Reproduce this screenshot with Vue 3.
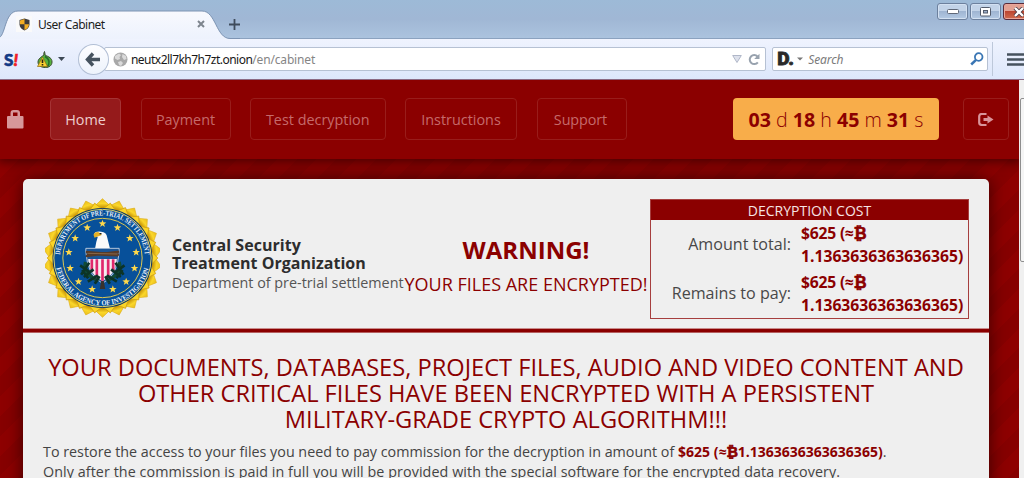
<script setup>
const links = [
  { label: 'Home', cls: 'home' },
  { label: 'Payment', cls: 'payment' },
  { label: 'Test decryption', cls: 'test' },
  { label: 'Instructions', cls: 'instructions' },
  { label: 'Support', cls: 'support' },
]
const timer = [['03', 'd'], ['18', 'h'], ['45', 'm'], ['31', 's']]
const costs = ['Amount total:', 'Remains to pay:']
const stars = [
  [172, 77], [126, 89], [217, 89], [90, 121], [254, 121], [71, 163], [273, 163],
  [75, 211], [268, 211], [100, 251], [243, 251], [141, 274], [203, 274],
]

function ring(cx, cy, outer, inner, count, turn = 0) {
  const pts = []
  for (let i = 0; i < count * 2; i++) {
    const r = i % 2 ? inner : outer
    const a = (Math.PI * i) / count - Math.PI / 2 + turn
    pts.push(`${(cx + r * Math.cos(a)).toFixed(1)},${(cy + r * Math.sin(a)).toFixed(1)}`)
  }
  return pts.join(' ')
}
const petals = ring(172, 180, 178, 158, 22)
const petalsInner = ring(172, 180, 166, 146, 22, Math.PI / 22)
</script>

<template>
  <div class="window">
    <div class="tabstrip">
      <svg class="tab-shape" width="240" height="39" viewBox="0 0 240 39">
        <defs>
          <linearGradient id="tabfill" x1="0" y1="0" x2="0" y2="1">
            <stop offset="0" stop-color="#f8f9fe" /><stop offset="1" stop-color="#edf2fd" />
          </linearGradient>
        </defs>
        <path d="M-2 39V38C6 38 4 11 18 11H202C216 11 216 38.500 230 38.500H240V39Z" fill="url(#tabfill)" />
        <path d="M-2 38C6 37 4 11 18 11H202C216 11 216 38.500 230 38.500H240" fill="none" stroke="#7d94b3" />
      </svg>
      <div class="tab">
        <span class="favicon">
          <svg width="11" height="13" viewBox="0 0 11 13">
            <path d="M5.500 .5 10.500 2V6.500C10.500 9.500 8 11.500 5.500 12.500 3 11.500 .5 9.500 .5 6.500V2Z" fill="#3d3a3a" />
            <path d="M5.500 1V6.200H10C10 9.200 7.500 11 5.500 12V6.200H1V2.400Z" fill="#f4ad22" />
          </svg>
        </span>
        <span class="tab-title">User Cabinet</span>
        <svg class="tab-close" width="8" height="8" viewBox="0 0 8 8"><path d="M1 1 7 7M7 1 1 7" stroke="#7e858e" stroke-width="2" /></svg>
      </div>
      <svg class="plus" width="11" height="11" viewBox="0 0 11 11"><path d="M5.500 0V11M0 5.500H11" stroke="#3f4c5c" stroke-width="1.800" /></svg>
      <div class="controls">
        <span class="ctl"><svg width="12" height="6" viewBox="0 0 12 6"><rect x=".5" y=".5" width="11" height="4" rx="1" fill="#fff" stroke="#5f6878" /></svg></span>
        <span class="ctl"><svg width="11" height="10" viewBox="0 0 11 10"><rect x=".5" y=".5" width="10" height="8.500" rx="1" fill="#fff" stroke="#535c6c" /><rect x="3.500" y="3.500" width="4" height="2.500" fill="#9db0cc" stroke="#535c6c" /></svg></span>
        <span class="ctl close"><svg width="12" height="10" viewBox="0 0 12 10"><path d="M2 1 10 9M10 1 2 9" stroke="#4c3b46" stroke-width="4" /><path d="M2 1 10 9M10 1 2 9" stroke="#fff" stroke-width="2.300" /></svg></span>
      </div>
    </div>

    <div class="toolbar">
      <span class="ext"><b>S</b><i>!</i></span>
      <svg class="onion" width="18" height="17" viewBox="0 0 18 17">
        <path d="M8 4C7.500 2.500 8 1.500 8.500 .5 9 2 9 3 9 4 13 6 16 7 16 11 16 14.500 13 16.500 9.500 16.500 5 16.500 2 14.500 2 11 2 8 5 6 8 4Z" fill="#56b23c" stroke="#3c4a33" />
        <path d="M9 5.500C14 8 14 13 11 16" fill="none" stroke="#286a2c" stroke-width="1.500" />
        <path d="M6.500 6 11.500 15.500H1.500Z" fill="#f8cf32" stroke="#8e6b12" stroke-width=".7" />
        <path d="M6.500 8.500V12M6.500 13V14.500" stroke="#272315" stroke-width="1.600" />
      </svg>
      <svg class="caret" width="7" height="4" viewBox="0 0 7 4"><path d="M0 0H7L3.500 4Z" fill="#3d4854" /></svg>
      <span class="back"><svg width="16" height="15" viewBox="0 0 16 15"><path d="M8 1.500 2.500 7.500 8 13.500M3 7.500H15" fill="none" stroke="#46535f" stroke-width="3.400" /></svg></span>
      <div class="urlbar">
        <svg class="globe" width="15" height="15" viewBox="0 0 15 15">
          <circle cx="7.500" cy="7.500" r="7" fill="#a8a8a8" />
          <path d="M2 4 6 1.500 8 3 6.500 5 7 7 4.500 8 2 6.500ZM9.500 2 13 4 13.500 7 11 8 9 5ZM5 10 8 9 10 11 8 14 6 13Z" fill="#dadada" />
        </svg>
        <span class="url">neutx2ll7kh7h7zt.onion<em>/en/cabinet</em></span>
        <svg class="drop" width="10" height="8" viewBox="0 0 10 8"><path d="M.7 .5H9.300L5 7.500Z" fill="#dde1ec" stroke="#b0b7c8" /></svg>
        <svg class="reload" width="12" height="13" viewBox="0 0 12 13"><path d="M9.800 9.300A4.500 4.500 0 1 1 9.500 3.500" fill="none" stroke="#98a2ae" stroke-width="2" /><path d="M11.500 .8V6H6.200Z" fill="#98a2ae" /></svg>
      </div>
      <div class="search">
        <span class="engine">D.</span>
        <svg width="6" height="4" viewBox="0 0 6 4"><path d="M0 .5H6L3 3.500Z" fill="#777" /></svg>
        <span class="placeholder">Search</span>
        <svg class="lens" width="14" height="14" viewBox="0 0 14 14"><circle cx="8.700" cy="5" r="3.800" fill="none" stroke="#3a76b4" stroke-width="1.800" /><path d="M6 7.800 1.200 12.500" stroke="#3a76b4" stroke-width="2.500" /></svg>
      </div>
      <span class="divider"></span>
      <svg class="burger" width="17" height="13" viewBox="0 0 17 13"><path d="M0 1.500H17M0 6.500H17M0 11.500H17" stroke="#46525e" stroke-width="2.600" /></svg>
    </div>

    <div class="viewport">
      <div class="page">
        <nav class="nav">
          <svg class="lock" width="17" height="19" viewBox="0 0 17 19"><path d="M3.500 6V3Q3.500 0 6.500 0H10Q13 0 13 3V6H15.500Q16.500 6 16.500 7V17.500Q16.500 18.500 15.500 18.500H1Q0 18.500 0 17.500V7Q0 6 1 6ZM6 6H10.500V2.500H6Z" fill="#d7989a" /></svg>
          <span v-for="l in links" :key="l.label" class="link" :class="l.cls">{{ l.label }}</span>
          <div class="timer"><template v-for="t in timer" :key="t[1]"><b>{{ t[0] }}</b> {{ t[1] }}{{ ' ' }}</template></div>
          <span class="logout">
            <svg width="16" height="13" viewBox="0 0 16 13"><path d="M8.500 1H4Q1.200 1 1.200 3.500V9.500Q1.200 12 4 12H8.500" fill="none" stroke="#d8949a" stroke-width="2.200" /><path d="M5.500 5H9.500V2.500L15.500 6.500 9.500 10.500V8H5.500Z" fill="#d8949a" /></svg>
          </span>
        </nav>

        <main class="card">
          <header class="head">
            <svg class="seal" width="115" height="120" viewBox="0 0 344 360">
              <defs>
                <path id="arcTop" d="M44.500 180A127.500 127.500 0 0 1 299.500 180" />
                <path id="arcBottom" d="M30 180A142 142 0 0 0 314 180" />
                <radialGradient id="gold" gradientUnits="userSpaceOnUse" cx="172" cy="180" r="180">
                  <stop offset=".84" stop-color="#c89508" /><stop offset=".91" stop-color="#fbd72a" /><stop offset="1" stop-color="#e6b91c" />
                </radialGradient>
              </defs>
              <polygon :points="petals" fill="url(#gold)" stroke="#e0b01c" stroke-width="2" />
              <polygon :points="petalsInner" fill="#fad528" stroke="#d6a616" stroke-width="3" />
              <circle cx="172" cy="180" r="150" fill="#0a3364" />
              <circle cx="172" cy="180" r="146" fill="#07509a" stroke="#dfd36c" stroke-width="3" />
              <circle cx="172" cy="180" r="119" fill="#07509a" stroke="#dcc752" stroke-width="3" />
              <g class="seal-text">
                <text textLength="382" lengthAdjust="spacingAndGlyphs"><textPath href="#arcTop" startOffset="9" textLength="382" lengthAdjust="spacingAndGlyphs">DEPARTMENT OF PRE-TRIAL SETTLEMENT</textPath></text>
                <text textLength="384" lengthAdjust="spacingAndGlyphs"><textPath href="#arcBottom" startOffset="30" textLength="384" lengthAdjust="spacingAndGlyphs">FEDERAL AGENCY OF INVESTIGATION</textPath></text>
              </g>
              <polygon v-for="(s, i) in stars" :key="i" :points="ring(s[0], s[1], 12, 5, 5)" fill="#ffd84a" />
              <path d="M122 151H222V162Q217 235 172 256Q127 235 122 162Z" fill="#1a5596" stroke="#d4dce6" stroke-width="2.500" />
              <path d="M129 183H215Q213 229 172 249Q131 229 129 183Z" fill="#f5edf0" />
              <path d="M140 184V222M155 184V240M172 184V248M189 184V240M204 184V222" stroke="#e0286c" stroke-width="8" />
              <path d="M150 150Q153 130 158 116Q149 119 147 108Q150 99 168 101Q184 102 186 118L194 150Z" fill="#fafafa" />
              <path d="M145 110Q148 100 161 103L170 111 156 116 148 119Z" fill="#e4b025" />
              <path d="M163 107H169" stroke="#222" stroke-width="4" />
              <path d="M122 162 222 170M122 174 222 161M126 168 219 172" stroke="#573b28" stroke-width="7" />
              <path d="M127 166 217 168" stroke="#a17b56" stroke-width="2" />
              <g fill="none" stroke="#124b35" stroke-width="10">
                <path d="M121 192Q112 226 159 249" /><path d="M222 192Q232 226 185 249" />
              </g>
              <g stroke="#0c3427" stroke-width="8">
                <path d="M105 202 134 223M132 194 108 230M145 214 116 237M128 251 158 232M149 257 163 235M111 216 129 241" />
                <path d="M238 202 209 223M211 194 235 230M198 214 227 237M215 251 185 232M194 257 180 235M232 216 214 241" />
              </g>
              <path d="M168 249 164 273H180L176 249Z" fill="#39322b" />
            </svg>
            <div class="org">
              <strong>Central Security<br />Treatment Organization</strong>
              <span>Department of pre-trial settlement</span>
            </div>
            <div class="warning"><strong>WARNING!</strong><span>YOUR FILES ARE ENCRYPTED!</span></div>
            <section class="cost">
              <h2>DECRYPTION COST</h2>
              <div v-for="c in costs" :key="c" class="row">
                <span class="label">{{ c }}</span>
                <b><span class="usd">$625 (≈<i class="btc">₿</i></span><span class="num">1.1363636363636365)</span></b>
              </div>
            </section>
          </header>
          <article class="body">
            <h1>YOUR DOCUMENTS, DATABASES, PROJECT FILES, AUDIO AND VIDEO CONTENT AND<br />OTHER CRITICAL FILES HAVE BEEN ENCRYPTED WITH A PERSISTENT<br />MILITARY-GRADE CRYPTO ALGORITHM!!!</h1>
            <p><span class="due">To restore the access to your files you need to pay commission for the decryption in amount of <b>$625 (≈<i class="btc">₿</i>1.1363636363636365)</b>.</span><span class="after">Only after the commission is paid in full you will be provided with the special software for the encrypted data recovery.</span></p>
          </article>
        </main>
      </div>
      <div class="scrollbar"><span class="thumb"></span></div>
    </div>
  </div>
</template>

<style>
html, body { margin: 0; overflow: hidden; }
</style>

<style scoped>
* { box-sizing: border-box; }
svg { display: block; flex: none; }
.window { width: 1024px; height: 478px; overflow: hidden; display: flex; flex-direction: column; font-family: "Open Sans", "Noto Sans", sans-serif; white-space: nowrap; }
.tabstrip { position: relative; flex: none; height: 39px; display: flex; background: linear-gradient(#9dbad7, #a0b7d5 50%, #abc3de); border-bottom: 1px solid #8ba2bf; }
.tab-shape { position: absolute; left: 0; top: 0; }
.tab { position: relative; width: 230px; height: 38px; padding: 10px 0 0 16px; display: flex; align-items: center; }
.favicon { width: 16px; height: 16px; display: flex; justify-content: center; align-items: center; background: #fafafa; }
.tab-title { margin-left: 6px; font: 12px "Noto Sans", sans-serif; color: #1c1c1c; letter-spacing: -.5px; width: 159px; }
.plus { margin: 19px 0 0 -1px; position: relative; }
.controls { margin: 3px -10px 0 auto; display: flex; gap: 2px; }
.ctl { width: 31px; height: 17px; border: 1px solid #6c809d; border-radius: 3px; box-shadow: inset 0 0 0 1px #d3e1f2; background: linear-gradient(#c2d3e8 45%, #9fb5d2 50%, #b4cae4); display: flex; justify-content: center; align-items: center; }
.ctl.close { border-color: #592b39; box-shadow: inset 0 0 0 1px #e9a69b; background: linear-gradient(#e3a193 45%, #bd4631 50%, #d06c4f); }
.toolbar { flex: none; height: 41px; display: flex; align-items: center; background: linear-gradient(#eff3fe, #dde7fb); border-bottom: 1px solid #8c6a84; }
.ext { width: 16px; margin-left: 4px; font: 900 17px/17px Lato, sans-serif; color: #133a86; display: flex; -webkit-text-stroke: .6px currentColor; }
.ext i { color: #ef2027; margin-left: 0; }
.onion { margin-left: 16px; }
.caret { margin-left: 4px; }
.back { width: 31px; height: 31px; margin-left: 13px; border: 1px solid #b2bfd5; border-radius: 50%; background: linear-gradient(#fdfdff, #edf3fc); display: flex; justify-content: center; align-items: center; position: relative; z-index: 1; }
.urlbar { margin-left: -5px; width: 663px; height: 24px; padding: 0 5px 0 8px; display: flex; align-items: center; background: #fff; border: 1px solid #b6c1d3; border-radius: 2px; }
.url { margin-left: 3px; font: 12px "Noto Sans", sans-serif; color: #171717; letter-spacing: -.52px; }
.url em { color: #858585; font-style: normal; letter-spacing: -.17px; }
.drop { margin-left: auto; margin-right: 1px; }
.reload { margin-left: 5px; }
.search { width: 216px; height: 24px; margin-left: 6px; padding: 0 4px; display: flex; align-items: center; background: #fff; border: 1px solid #b6c1d3; border-radius: 2px; }
.engine { font: 900 19px/20px Roboto, sans-serif; color: #292929; width: 20px; letter-spacing: -.2px; -webkit-text-stroke: .8px #292929; }
.placeholder { margin: 0 auto 0 5px; font: italic 12px "Noto Sans", sans-serif; color: #7b7b7b; letter-spacing: -.1px; }
.lens { margin-right: -1px; }
.divider { width: 1px; height: 34px; margin-left: 4px; background: #bdc8da; }
.burger { margin-left: 14px; }

.viewport { flex: 1; min-height: 0; display: flex; margin-top: -1px; padding-top: 1px; }
.page { width: 1019px; overflow: hidden; background: repeating-linear-gradient(135deg, #8e0000 0 14px, #870000 14px 28px); }
.nav { position: relative; height: 79px; padding: 18px 10px 0 7px; display: flex; align-items: flex-start; background: #8b0000; box-shadow: 0 1px 10px 2px rgba(40, 0, 0, .65); }
.lock { margin-top: 12px; }
.link, .logout { height: 42px; border: 1px solid #991d1b; border-radius: 4px; color: #c56a6b; font-size: 14.400px; line-height: 40px; display: flex; justify-content: center; align-items: center; margin-left: 19.500px; }
.link { padding-top: 2px; }
.home { width: 71px; margin-left: 26px; background: #951a1b; border-color: #a53334; color: #edcdcd; }
.payment { width: 90px; }
.test { width: 135.500px; }
.instructions { width: 112px; }
.support { width: 90px; margin-left: 20px; padding-right: 3px; letter-spacing: -.1px; }
.timer { margin-left: auto; width: 206px; height: 42px; border-radius: 4px; background: #f8ad4a; color: #8b0000; font-size: 19.600px; line-height: 44px; text-align: center; font-weight: 300; }
.timer b { font-weight: 700; }
.logout { width: 46px; margin-left: 24px; }
.card { width: 966px; height: 340px; margin: 20px 0 0 23px; border-radius: 5px 5px 0 0; background: #efefef; box-shadow: 0 0 18px rgba(40, 0, 0, .8); }
.head { height: 153px; border-bottom: 3px solid #8b0000; box-shadow: 0 1px #b56060, inset 0 -1px #c98c8c; display: flex; align-items: flex-start; }
.seal { margin: 19px 0 0 22px; }
.seal-text { font: 700 22px "Liberation Serif", serif; fill: #e8eef6; }
.org { width: 233px; margin: 57px 0 0 12px; display: flex; flex-direction: column; font-size: 14.350px; line-height: 21px; color: #555; }
.org strong { font-size: 16px; line-height: 18px; color: #2d2d2d; letter-spacing: .03px; }
.warning { width: 242px; margin-top: 55px; display: flex; flex-direction: column; align-items: center; color: #8b0000; font-size: 18px; line-height: 36px; }
.warning strong { font-size: 24px; line-height: 32px; }
.cost { width: 319px; height: 120px; margin: 20px 0 0 3px; border: 1px solid #a63e3e; }
.cost h2 { margin: 0; height: 20px; background: #8b0000; color: #f6e4e4; font-size: 14px; font-weight: 400; line-height: 22px; text-align: center; }
.row { display: flex; align-items: center; height: 49px; font-size: 16.100px; line-height: 23px; color: #484848; }
.row .label { width: 140px; text-align: right; margin-right: 10px; }
.row b { display: flex; flex-direction: column; color: #8b0000; font-size: 15.700px; padding-top: 1px; }
.row b span { height: 23px; }
.usd { letter-spacing: -.2px; }
.btc { display: inline-block; font-style: normal; font-family: "DejaVu Sans", sans-serif; font-weight: 700; line-height: 1; -webkit-text-stroke: .7px currentColor; }
.body { padding: 22px 20px 0; }
h1 { margin: 0; font-size: 23.650px; font-weight: 400; line-height: 26.200px; color: #8b0000; text-align: center; }
p { margin: 9.600px 0 0; font-size: 14.320px; line-height: 20px; color: #444; display: flex; flex-direction: column; }
p span { height: 20px; }
p b { color: #8b0000; font-size: 14px; }
.after { letter-spacing: .07px; }
.scrollbar { width: 5px; padding: 18px 0 0 1px; background: #f0f0f0; }
.thumb { display: block; height: 164px; width: 8px; border: 1px solid #8e8e8e; border-radius: 2px; background: #f5f5f5; }
</style>
